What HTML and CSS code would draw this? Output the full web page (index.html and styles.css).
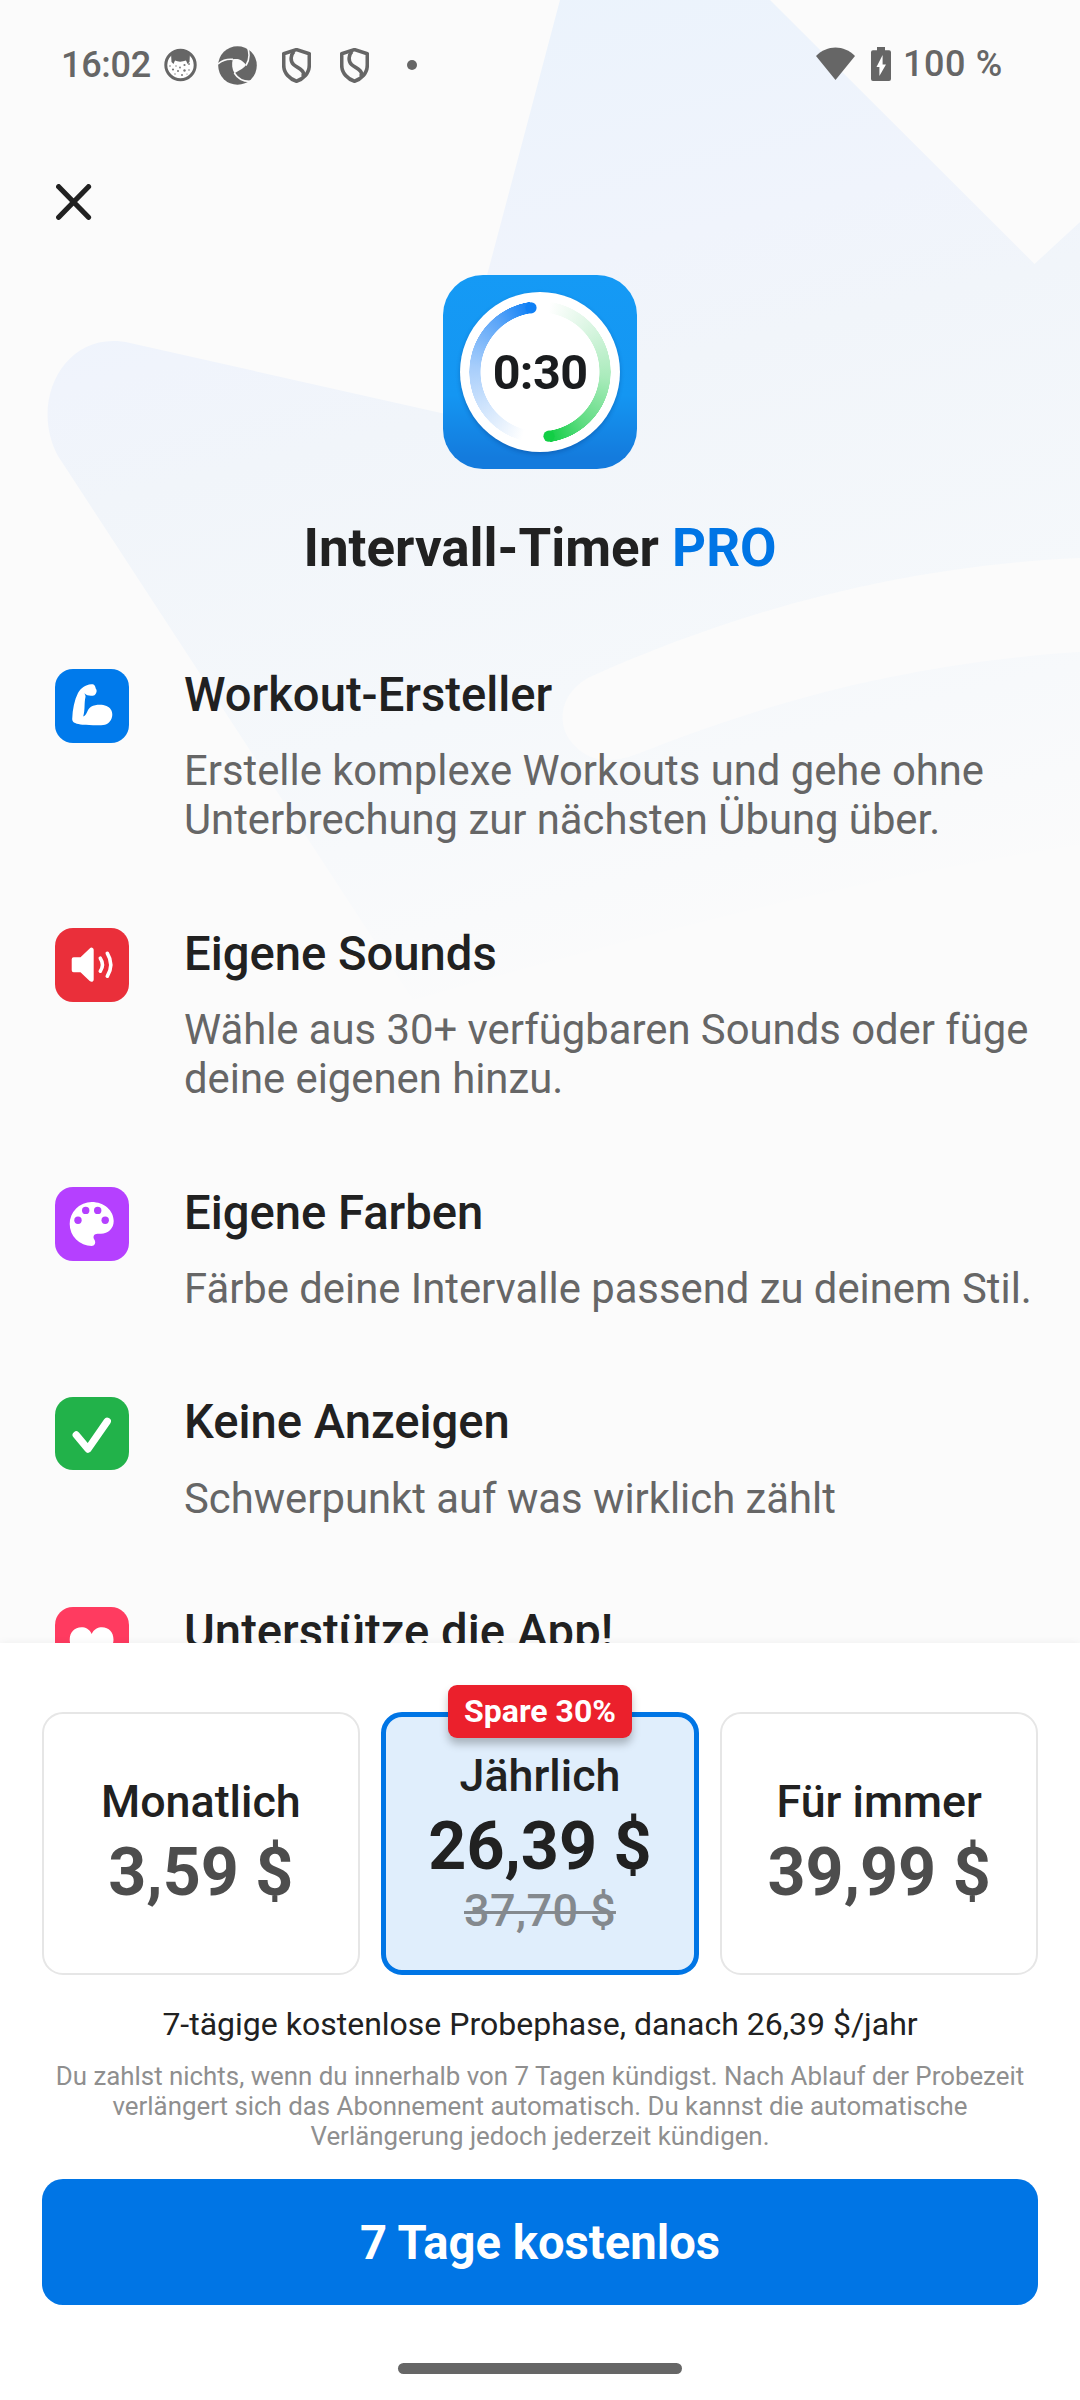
FILE: index.html
```html
<!DOCTYPE html>
<html lang="de">
<head>
<meta charset="utf-8">
<title>Intervall-Timer PRO</title>
<link rel="stylesheet" href="styles.css">
</head>
<body>
<main class="content">
  <svg class="backdrop" viewBox="0 0 1080 1100" aria-hidden="true">
    <defs>
      <linearGradient id="star" gradientUnits="userSpaceOnUse" x1="480" y1="0" x2="720" y2="960">
        <stop offset="0" stop-color="#ebf3fc"/>
        <stop offset="0.28" stop-color="#f0f4fc"/>
        <stop offset="0.4" stop-color="#f1f5fa"/>
        <stop offset="0.7" stop-color="#f5f8fb"/>
        <stop offset="1" stop-color="#fbfbfb"/>
      </linearGradient>
    </defs>
    <path fill="url(#star)" d="M560 0H770L1034.500 264L1080 222V845C850 880 660 930 413 1000L58 456C28 400 66 328 130 343L450 415Z"/>
    <path fill="#fbfbfb" d="M1080 558C900 566 740 610 590 677C560 692 554 726 575 746C590 762 612 764 640 753C780 697 920 662 1080 652Z"/>
  </svg>

  <header class="status">
    <span class="clock">16:02</span>
    <svg class="s-face" viewBox="0 0 33 34"><circle cx="16.500" cy="17" r="14.700" fill="#fff" stroke="#666" stroke-width="3"/><path fill="#666" d="M7 5C12 1 21 1 26 5L25.500 14L23.500 16L22 12.500C18 14 14 14 11 12.500L9.500 16L7.500 14Z"/><g fill="#777"><circle cx="6" cy="18" r=".8"/><circle cx="9" cy="21.500" r="1.100"/><circle cx="12" cy="18" r=".7"/><circle cx="16" cy="19.500" r=".9"/><circle cx="20.500" cy="17" r="1.100"/><circle cx="25" cy="16" r=".9"/><circle cx="20.500" cy="22.500" r="1.200"/><circle cx="25" cy="22" r=".8"/><circle cx="14" cy="23" r="1"/><circle cx="18" cy="27" r="1"/><circle cx="11" cy="26" r=".7"/><circle cx="23" cy="26" r=".6"/></g></svg>
    <svg class="s-aperture" viewBox="0 0 39 39"><circle cx="19.500" cy="19.500" r="19.300" fill="#666"/><path fill="#fbfbfb" d="M14.800 13.300C18 12.600 21 13 23 14.300C25.500 16 27 17.500 28 19C26.500 21 24.500 22.800 22 24L16.500 27.300C14 23 13.500 18 14.800 13.300Z"/><path fill="none" stroke="#fbfbfb" stroke-width="1.600" d="M28 19.500C31.500 14 32 8 29.500 1M15 13.400C9 12.800 4 14.500 0 18M16.300 27C20 33 27 36.500 36 35"/></svg>
    <svg class="s-shield" viewBox="0 0 29 35"><path d="M14.500 1.600L27.300 5.700V17C27.300 25.500 21 31.200 14.500 33.200C8 31.200 1.700 25.500 1.700 17V5.700Z"/><path d="M12 3.500C8.500 7 8 13 11.500 16.500C15 20 21 21 21.500 25.500L21 28"/></svg>
    <svg class="s-shield" viewBox="0 0 29 35"><path d="M14.500 1.600L27.300 5.700V17C27.300 25.500 21 31.200 14.500 33.200C8 31.200 1.700 25.500 1.700 17V5.700Z"/><path d="M12 3.500C8.500 7 8 13 11.500 16.500C15 20 21 21 21.500 25.500L21 28"/></svg>
    <span class="more"></span>
    <svg class="s-wifi" viewBox="0 0 39 33"><path fill="#666" d="M0 9C11-2.500 28-2.500 39 9L19.500 33Z"/></svg>
    <svg class="s-battery" viewBox="0 0 20 34"><path fill="#666" d="M6 0H14V3.300H18Q20 3.300 20 5.300V32Q20 34 18 34H2Q0 34 0 32V5.300Q0 3.300 2 3.300H6Z"/><path fill="#fff" d="M11.600 8V17.500H15L8.400 29V20H5.500Z"/></svg>
    <span class="percent">100 %</span>
  </header>

  <svg class="close" viewBox="0 0 36 36" role="img" aria-label="Schließen"><path d="M2.700 2.700L32.500 33.300M32.500 2.700L2.700 33.300"/></svg>

  <div class="app-icon">
    <div class="dial">
      <span class="ring"></span>
      <svg class="caps" viewBox="0 0 160 160"><circle cx="71" cy="15.800" r="5.600" fill="#0f80f5"/><circle cx="89" cy="144.200" r="5.600" fill="#12ce45"/></svg>
      <span class="dial-time">0:30</span>
    </div>
  </div>
  <h1 class="title">Intervall-Timer <span>PRO</span></h1>

  <ul class="features">
    <li>
      <svg class="tile blue" viewBox="0 0 73.300 73.300"><path fill="#fff" d="M36.300 15.300C39.500 14.600 40.500 17.500 40.700 19.500C42.500 21.500 41.500 24.500 39.500 26.200C36.500 27.300 32 27 29.500 24.300C29.500 25.500 31 26.500 30.500 28C29 34 30.300 41 28.200 47.500C32.500 46 31.500 40.500 36 37.700C41 35.300 47 35.200 51.500 37C55.500 38.800 57.500 42 57.300 46C57 51 54 54.700 50 55.700C44 56.800 34 56 27.500 55.700C22 55 17 54 17.200 50C17.500 40 19.500 31 23 24C26 19 30 16 36.300 15.300Z"/></svg>
      <div><h2>Workout-Ersteller</h2><p>Erstelle komplexe Workouts und gehe ohne Unterbrechung zur nächsten Übung über.</p></div>
    </li>
    <li>
      <svg class="tile red" viewBox="0 0 73.300 73.300"><path fill="#fff" d="M18.700 29.300H25.500L34.700 20.400Q36.500 18.900 38 20.300Q38.700 21 38.700 22V51.500Q38.700 52.500 38 53.200Q36.500 54.500 34.700 53L25.500 44.300H18.700Q16.700 44.300 16.700 42.300V31.300Q16.700 29.300 18.700 29.300Z"/><path class="wave" d="M45.300 30.200Q49.600 36.700 45.300 43.200M52.300 25.300Q59.300 36.700 52.300 48.200"/></svg>
      <div><h2>Eigene Sounds</h2><p>Wähle aus 30+ verfügbaren Sounds oder füge deine eigenen hinzu.</p></div>
    </li>
    <li>
      <svg class="tile purple" viewBox="0 0 73.300 73.300"><path fill="#fff" d="M36.700 15C49 15 58.700 23.500 58.700 34C58.700 41.500 53 46.700 46 46.700H42.500C39 46.700 37.500 49.700 39.300 52.500C41.500 56 39.500 59 36.700 59A22 22 0 0 1 36.700 15Z"/><g fill="#b540ff"><circle cx="23" cy="33.300" r="3.700"/><circle cx="30.700" cy="23.400" r="3.700"/><circle cx="42.700" cy="23.400" r="3.700"/><circle cx="50.200" cy="33.300" r="3.700"/></g></svg>
      <div><h2>Eigene Farben</h2><p>Färbe deine Intervalle passend zu deinem Stil.</p></div>
    </li>
    <li>
      <svg class="tile green" viewBox="0 0 73.300 73.300"><path class="tick" d="M21.300 38L33 52L52.200 24.300"/></svg>
      <div><h2>Keine Anzeigen</h2><p>Schwerpunkt auf was wirklich zählt</p></div>
    </li>
    <li>
      <svg class="tile pink" viewBox="0 0 73.300 73.300"><path fill="#fff" d="M36.700 27C39 22 43 20.300 47 20.300C54 20.300 58.500 25.500 58.500 32.500C58.500 43 48 50 36.700 59C25.500 50 14.700 43 14.700 32.500C14.700 25.500 19.500 20.300 26.500 20.300C30.500 20.300 34.500 22 36.700 27Z"/></svg>
      <div><h2>Unterstütze die App!</h2></div>
    </li>
  </ul>
</main>

<section class="sheet">
  <div class="plans">
    <div class="plan"><span class="name">Monatlich</span><span class="price">3,59 $</span></div>
    <div class="plan selected"><span class="badge">Spare 30%</span><span class="name">Jährlich</span><span class="price">26,39 $</span><span class="old">37,70 $</span></div>
    <div class="plan"><span class="name">Für immer</span><span class="price">39,99 $</span></div>
  </div>
  <p class="trial">7-tägige kostenlose Probephase, danach 26,39 $/jahr</p>
  <p class="terms">Du zahlst nichts, wenn du innerhalb von 7 Tagen kündigst. Nach Ablauf der Probezeit<br>verlängert sich das Abonnement automatisch. Du kannst die automatische<br>Verlängerung jedoch jederzeit kündigen.</p>
  <button class="cta" type="button">7 Tage kostenlos</button>
  <div class="home"></div>
</section>
</body>
</html>
```
FILE: styles.css
```css
* { box-sizing: border-box; }

body {
  margin: 0;
  width: 1080px;
  height: 2400px;
  overflow: hidden;
  display: flex;
  flex-direction: column;
  background: #fbfbfb;
  color: #212121;
  font-family: Roboto, "Liberation Sans", sans-serif;
}

h1, h2, p, ul { margin: 0; padding: 0; }

.content {
  position: relative;
  height: 1643px;
  overflow: hidden;
  display: flex;
  flex-direction: column;
}

.backdrop {
  position: absolute;
  top: 0;
  left: 0;
  width: 1080px;
  height: 1100px;
  z-index: -1;
}

/* status bar */
.status {
  height: 130px;
  flex: none;
  padding: 0 76px 0 61px;
  display: flex;
  align-items: center;
  color: #666;
  font-size: 36px;
  font-weight: 500;
}
.clock { width: 103px; white-space: nowrap; letter-spacing: -0.3px; }
.s-face { width: 33px; height: 34px; margin-right: 21px; }
.s-aperture { width: 39px; height: 39px; margin-right: 25px; }
.s-shield {
  width: 29px;
  height: 35px;
  margin-right: 29px;
  fill: none;
  stroke: #666;
  stroke-width: 3.6;
  stroke-linejoin: round;
}
.more { width: 10px; height: 10px; margin-left: 9px; border-radius: 50%; background: #666; }
.s-wifi { width: 39px; height: 33px; margin: -3px 16px 0 auto; }
.s-battery { width: 20px; height: 34px; margin: -3px 12px 0 0; }
.percent { width: 101px; margin-top: -2px; white-space: nowrap; letter-spacing: 0.6px; }

.close {
  width: 36px;
  height: 36px;
  flex: none;
  margin: 53.500px 0 0 55.500px;
  fill: none;
  stroke: #212121;
  stroke-width: 5.2;
  stroke-linecap: round;
}

/* app logo */
.app-icon {
  width: 194px;
  height: 194px;
  flex: none;
  align-self: center;
  margin-top: 55.500px;
  border-radius: 40px;
  background: linear-gradient(#159af5 0%, #1496f2 62%, #147bdd 94%);
  display: grid;
  place-items: center;
}
.dial {
  width: 160px;
  height: 160px;
  border-radius: 50%;
  background: #fff;
  box-shadow: 0 2px 4px rgba(0, 40, 110, 0.3);
  display: grid;
  place-items: center;
}
.dial > * { grid-area: 1 / 1; }
.ring {
  width: 142px;
  height: 142px;
  border-radius: 50%;
  background: conic-gradient(#fff 8deg, #e2f7e8 40deg, #a9ebbb 95deg, #5fdc82 140deg, #12ce45 172deg, #fff 172deg 195deg, #e5f0fd 218deg, #a6cdfb 275deg, #5ba5f8 320deg, #0f80f5 352deg, #fff 352deg);
  -webkit-mask: radial-gradient(circle, transparent 59.200px, #000 59.800px 70.500px, transparent 71px);
  mask: radial-gradient(circle, transparent 59.200px, #000 59.800px 70.500px, transparent 71px);
}
.caps { position: relative; width: 160px; height: 160px; }
.dial-time { color: #1a1c1e; font-size: 48.500px; font-weight: 700; line-height: 58px; letter-spacing: -0.6px; padding-top: 2px; }

.title {
  margin-top: 49px;
  text-align: center;
  font-size: 52.900px;
  line-height: 61px;
  font-weight: 700;
}
.title span { color: #0075e5; }

/* feature list */
.features {
  list-style: none;
  margin-top: 88.500px;
  padding: 0 42px 0 55.300px;
  display: flex;
  flex-direction: column;
  gap: 82px;
}
.features li { display: flex; gap: 55.400px; }
.features h2 { font-size: 47.200px; line-height: 55px; font-weight: 500; white-space: nowrap; }
.features p { margin-top: 23.500px; width: 870px; color: #666; font-size: 41.800px; line-height: 49.250px; }
.tile { width: 73.300px; height: 73.300px; flex: none; margin-top: 1.800px; border-radius: 18px; }
.blue { background: #007aeb; }
.red { background: #ea2f3a; }
.purple { background: #b540ff; }
.green { background: #22b24a; }
.pink { background: #ff3b60; }
.wave { fill: none; stroke: #fff; stroke-width: 3.600; stroke-linecap: round; }
.tick { fill: none; stroke: #fff; stroke-width: 7.400; stroke-linecap: round; stroke-linejoin: round; }

/* purchase sheet */
.sheet {
  position: relative;
  height: 757px;
  padding: 69px 42px 0;
  background: #fff;
  box-shadow: 0 0 8px rgba(0, 0, 0, 0.06);
  display: flex;
  flex-direction: column;
}
.plans { display: grid; grid-template-columns: repeat(3, 1fr); gap: 21.500px; height: 263px; }
.plan {
  position: relative;
  border: 2.600px solid #e6e6e6;
  border-radius: 21px;
  display: flex;
  flex-direction: column;
  align-items: center;
  justify-content: center;
}
.plan.selected { border: 5px solid #0075e5; background: #e0eefc; }
.name { font-size: 44.800px; line-height: 52px; font-weight: 500; }
.price { margin-top: 5.500px; font-size: 66.400px; line-height: 77.500px; font-weight: 700; color: #4d4d4d; }
.selected .price { color: #212121; }
.old { font-size: 45px; line-height: 52px; font-weight: 500; letter-spacing: 0.4px; color: #84898e; text-decoration: line-through; text-decoration-thickness: 2.500px; }
.badge {
  position: absolute;
  top: -32px;
  left: 50%;
  transform: translateX(-50%);
  width: 184px;
  height: 53px;
  border-radius: 9px;
  background: #eb202c;
  box-shadow: 0 6px 9px rgba(0, 0, 0, 0.25);
  color: #fff;
  font-size: 32px;
  line-height: 53px;
  font-weight: 700;
  text-align: center;
  white-space: nowrap;
}
.trial { margin-top: 31px; text-align: center; font-size: 32px; line-height: 36px; }
.terms { margin: 18.500px -20px 0; text-align: center; color: #8f8f8f; font-size: 25.850px; line-height: 30px; }
.cta {
  margin: 28.500px 0 0;
  height: 126px;
  border: 0;
  border-radius: 21px;
  background: #0075e5;
  color: #fff;
  font: 700 47.200px/126px Roboto, "Liberation Sans", sans-serif;
  padding: 1px 0 0;
}
.home { width: 284px; height: 11px; margin: 58px auto 0; border-radius: 6px; background: #666; }
```
